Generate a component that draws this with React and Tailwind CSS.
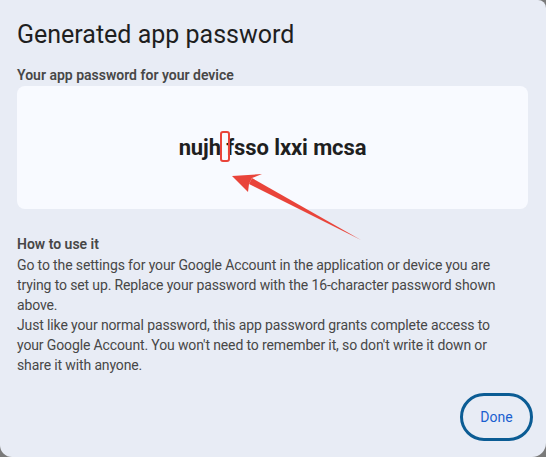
export default function App() {
  return (
    <div className="w-[546px] h-[457px] bg-[#7a7a7a] overflow-hidden" style={{ fontFamily: "Roboto, 'Noto Sans', sans-serif" }}>
      <div className="relative w-[546px] h-[457px] bg-[#e8ecf5] rounded-tr-[8px] rounded-bl-[12px] rounded-br-[14px] flex flex-col px-[17px]">
        <h1 className="mt-[19px] text-[25px] leading-[31px] text-[#1f1f1f] font-normal">Generated app password</h1>
        <div className="mt-[16px] text-[14px] leading-[18px] font-semibold text-[#474747]">Your app password for your device</div>
        <div className="mt-[2px] h-[123px] w-[511px] bg-[#f8faff] rounded-[8px] flex items-center justify-center">
          <span className="text-[22px] font-bold text-[#1f1f1f] tracking-[-0.1px]">nujh fsso lxxi mcsa</span>
        </div>
        <div className="mt-[26px] text-[14px] leading-[18px] font-semibold text-[#474747]">How to use it</div>
        <p className="mt-[2px] text-[14px] leading-[20px] text-[#474747] w-[500px] tracking-[-0.13px]">
          Go to the settings for your Google Account in the application or device you are trying to set up. Replace your password with the 16-character password shown above.
          <br />
          Just like your normal password, this app password grants complete access to your Google Account. You won't need to remember it, so don't write it down or share it with anyone.
        </p>
        <div className="flex justify-end mt-auto mb-[16px] mr-[-4px]">
          <button className="w-[73px] h-[48px] rounded-full border-[3px] border-[#0b5c94] text-[#1a5fd0] text-[14px] font-normal">Done</button>
        </div>
        <div className="absolute left-[220px] top-[131px] w-[10px] h-[31px] border-[2px] border-[#e9443a] rounded-[3px]" />
        <svg className="absolute left-0 top-0" width="546" height="457" viewBox="0 0 546 457">
          <path d="M361 240 L249 184 L252 178 Z" fill="#e9443a" />
          <path d="M232 176 L262 174 L252 178 L249 184 L248 192 Z" fill="#e9443a" />
        </svg>
      </div>
    </div>
  );
}
